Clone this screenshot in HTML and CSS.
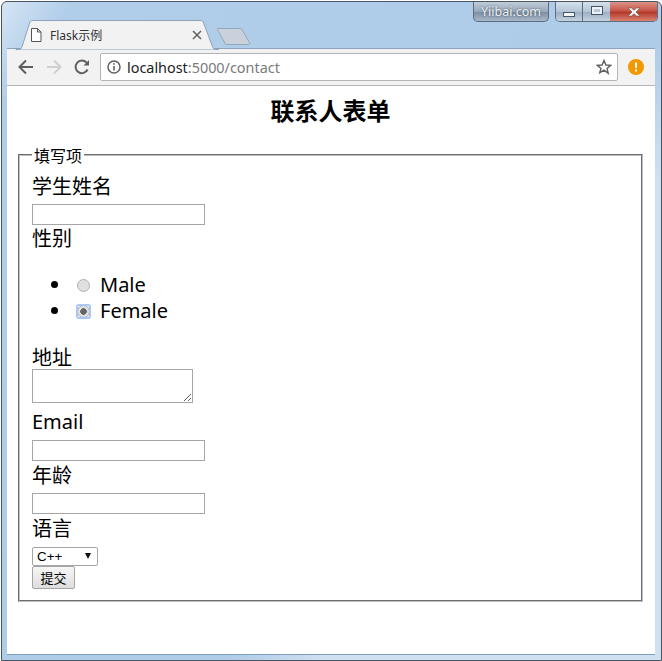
FILE: index.html
```html
<!DOCTYPE html>
<html lang="zh">
<head>
<meta charset="utf-8">
<title>Flask示例</title>
<link rel="stylesheet" href="styles.css">
</head>
<body>
<div class="window">
  <div class="caption">
    <div class="brand">Yiibai.com</div>
    <div class="controls">
      <div class="ctl ctl-min"><span class="min-glyph"></span></div>
      <div class="ctl ctl-max"><span class="max-glyph"></span></div>
      <div class="ctl ctl-close">
        <svg width="14" height="10" viewBox="0 0 14 10"><path d="M1 1h3.500l2.500 2.200L9.500 1H13L9 5l4 4H9.500L7 6.800 4.500 9H1l4-4z" fill="#f4f4f4" stroke="#7a4a44" stroke-width=".6"/></svg>
      </div>
    </div>
  </div>
  <div class="tabstrip">
    <div class="tab">
      <svg class="tab-shape" width="206" height="30" viewBox="0 0 206 30"><path d="M1 29.500h2.500c2 0 3-1 3.600-3L14.600 3c.6-2 1.400-2.500 3.400-2.500h167c2 0 3 .5 3.600 2.500l8.800 23.500c.7 2 1.600 3 3.600 3h2.500V30H1z" fill="#f2f2f2" stroke="#8ea3b9"/></svg>
      <svg class="tab-icon" width="12" height="14" viewBox="0 0 12 14"><path d="M1.500.5h6l3.500 3.500v9.500h-9.500zM7.500.5V4H11" fill="#fff" stroke="#555"/></svg>
      <span class="tab-title">Flask示例</span>
      <svg class="tab-close" width="10" height="10" viewBox="0 0 10 10"><path d="M1 1l8 8M9 1l-8 8" stroke="#5f5f5f" stroke-width="1.500"/></svg>
    </div>
    <svg class="newtab" width="36" height="18" viewBox="0 0 36 18"><path d="M1 .5h22c1 0 1.500.4 2 1.200l7.500 13c.6 1 .2 1.800-1 1.800H10c-1 0-1.500-.4-2-1.200L.5 1.800C0 1 0 .5 1 .5z" fill="#c9d2dc" stroke="#93a7ba"/></svg>
  </div>
  <div class="toolbar">
    <svg class="nav" width="20" height="20" viewBox="0 0 20 20"><path d="M17 10H4M10 3.500L3.500 10l6.500 6.500" fill="none" stroke="#5f5f5f" stroke-width="2"/></svg>
    <svg class="nav" width="20" height="20" viewBox="0 0 20 20"><path d="M3 10h13M10 3.500l6.500 6.500-6.500 6.500" fill="none" stroke="#d0d0d0" stroke-width="2"/></svg>
    <svg class="nav" width="20" height="20" viewBox="0 0 20 20"><path d="M15.600 12.500A6.300 6.300 0 1 1 14.500 5.500" fill="none" stroke="#5f5f5f" stroke-width="2"/><path d="M11.500 8.500H17V3z" fill="#5f5f5f"/></svg>
    <div class="omnibox">
      <svg class="info" width="14" height="14" viewBox="0 0 14 14"><circle cx="7" cy="7" r="6" fill="none" stroke="#5f5f5f" stroke-width="1.500"/><path d="M7 6v4.500M7 3.300v1.500" stroke="#5f5f5f" stroke-width="1.600"/></svg>
      <span class="url"><span class="host">localhost</span>:5000/contact</span>
      <svg class="star" width="16" height="16" viewBox="0 0 16 16"><path d="M8 1.500l1.900 4.500 4.800.4-3.700 3.100 1.200 4.700L8 11.200l-4.200 2.500L5 9.500 1.300 6.400l4.800-.4z" fill="none" stroke="#5f5f5f" stroke-width="1.400"/></svg>
    </div>
    <svg class="alert" width="16" height="16" viewBox="0 0 16 16"><circle cx="8" cy="8" r="8" fill="#f29900"/><path d="M8 3.500v5.500M8 10.500v2" stroke="#fff" stroke-width="2"/></svg>
  </div>
  <main class="page">
    <h1 class="title">联系人表单</h1>
    <form>
      <fieldset class="box">
        <legend class="legend">填写项</legend>
        <label class="field-label first">学生姓名</label>
        <input class="text-input" type="text">
        <label class="field-label gender">性别</label>
        <ul class="radios">
          <li><span class="radio"></span><span>Male</span></li>
          <li><span class="radio checked"></span><span>Female</span></li>
        </ul>
        <label class="field-label addr">地址</label>
        <textarea class="area"></textarea>
        <label class="field-label email">Email</label>
        <input class="text-input" type="text">
        <label class="field-label age">年龄</label>
        <input class="text-input" type="text">
        <label class="field-label language">语言</label>
        <div class="lang-wrap">
          <select class="lang"><option>C++</option></select>
        </div>
        <button class="submit" type="button">提交</button>
      </fieldset>
    </form>
  </main>
</div>
</body>
</html>
```

FILE: styles.css
```css
* { box-sizing: border-box; }
html, body { margin: 0; padding: 0; background: #fff; overflow: hidden; }
body { width: 662px; height: 661px; font-family: "Noto Sans", "Noto Sans CJK SC", sans-serif; }
.window {
  position: relative;
  width: 661px;
  height: 660px;
  margin: 1px 0 0 1px;
  padding: 17px 6px 5px 5px;
  display: flex;
  flex-direction: column;
  border: 1px solid #4a5563;
  border-radius: 6px 6px 0 0;
  background: linear-gradient(125deg, #d6e5f4 0, #b0cde9 60px, #aecbe8 560px, #cfe0f1 640px);
}
.caption {
  position: absolute;
  top: 0;
  right: 3px;
  display: flex;
  align-items: flex-start;
  gap: 6px;
}
.brand {
  width: 76px;
  height: 20px;
  border: 1px solid #5e6d7e;
  border-top: 0;
  border-radius: 0 0 5px 5px;
  background: linear-gradient(#c0ccd8, #99a8b9 50%, #7f90a3 55%, #a9b8c8);
  color: #eef1f4;
  font: 12.500px/19px "Noto Sans", sans-serif;
  text-align: center;
  text-shadow: 0 0 2px #3a4a5a;
}
.controls { display: flex; height: 20px; border: 1px solid #5e6d7e; border-top: 0; border-radius: 0 0 5px 5px; overflow: hidden; }
.ctl { display: flex; align-items: center; justify-content: center; height: 100%; }
.ctl-min { width: 27px; background: linear-gradient(#d5e0ea, #b5c5d6 50%, #9eb0c4 55%, #c3d2e0); border-right: 1px solid #5e6d7e; }
.ctl-max { width: 27px; background: linear-gradient(#d5e0ea, #b5c5d6 50%, #9eb0c4 55%, #c3d2e0); }
.ctl-close { width: 47px; background: linear-gradient(#dc9388, #c8574a 45%, #b43a2c 55%, #d9826f); }
.min-glyph { width: 12px; height: 5px; margin-top: 6px; background: #f2f5f8; border: 1px solid #46566a; }
.max-glyph { width: 12px; height: 9px; margin-bottom: 2px; background: transparent; border: 3px solid #eef2f6; outline: 1px solid #46566a; outline-offset: -1px; }
.tabstrip { display: flex; align-items: flex-end; height: 29px; padding-left: 8px; flex: none; position: relative; }
.tab {
  position: relative;
  width: 204px;
  height: 29px;
  display: flex;
  align-items: center;
  padding: 0 16px 0 8px;
  font: 12px "Noto Sans", "Noto Sans CJK SC", sans-serif;
  color: #333;
  z-index: 1;
  margin-bottom: -1px;
}
.tab-shape { position: absolute; left: 0; top: 0; }
.tab-icon { position: relative; margin: 0 8px 0 7px; flex: none; }
.tab-title { position: relative; flex: 1; }
.tab-close { position: relative; flex: none; margin-right: 1px; }
.newtab { margin: 0 0 2px -2px; flex: none; }
.toolbar {
  height: 38px;
  flex: none;
  display: flex;
  align-items: center;
  padding: 0 10px 0 9px;
  background: #f2f2f2;
  border-top: 1px solid #8ea3b9;
  border-bottom: 1px solid #b4b4b4;
  gap: 8px;
}
.nav { flex: none; }
.omnibox {
  flex: 1;
  height: 28px;
  display: flex;
  align-items: center;
  margin: 0 2px 0 0;
  padding: 0 5px 0 6px;
  background: #fff;
  border: 1px solid #b4b4b4;
  border-radius: 2px;
}
.info { flex: none; margin-right: 6px; }
.url { flex: 1; font: 14.400px "Noto Sans", sans-serif; color: #7a7a7a; }
.host { color: #222; }
.star { flex: none; }
.alert { flex: none; margin-right: 1px; }
.page {
  flex: 1;
  background: #fff;
  padding: 0 12px 0 11px;
  border-bottom: 1px solid #7f9dbd;
  overflow: hidden;
}
.title {
  margin: 0;
  padding-top: 7px;
  height: 49px;
  font: 700 24px/34px "Noto Sans CJK SC", sans-serif;
  text-align: center;
  color: #000;
}
.box {
  margin: 11px 0 0;
  padding: 0 12px 10px;
  height: 456px;
  border: 2px groove #c0c0c0;
  min-width: 0;
}
.legend { padding: 0 2px; margin-left: 0; font: 16px/18px "Noto Sans CJK SC", sans-serif; color: #000; }
.field-label { display: block; height: 26px; font: 20px/28px "Noto Sans", "Noto Sans CJK SC", sans-serif; color: #000; }
.first { margin-top: 9px; height: 31px; }
.text-input { display: block; width: 173px; height: 21px; margin: 0; padding: 1px 2px; border: 1px solid #a6a6a6; border-radius: 0; background: #fff; }
.gender { height: 26px; }
.radios { list-style: disc; margin: 21px 0 20px; padding: 0 0 0 40px; font: 20px/26px "Noto Sans", sans-serif; color: #000; }
.radios li { height: 26px; }
.radio {
  display: inline-block;
  width: 13px;
  height: 13px;
  margin: 0 10px 0 5px;
  vertical-align: 0;
  border: 1px solid #b0b0b0;
  border-radius: 50%;
  background: #e0e0e0;
}
.checked { position: relative; background: radial-gradient(circle, #666 0 3px, #e0e0e0 3.500px); }
.checked::after {
  content: "";
  position: absolute;
  inset: -2px;
  border: 2px solid #a9c7f5;
  border-radius: 3px;
}
.addr { height: 25px; }
.area { display: block; width: 161px; height: 34px; margin: 0; padding: 2px; border: 1px solid #a6a6a6; border-radius: 0; background: #fff; }
.email { margin-top: 5px; height: 32px; line-height: 28px; }
.age { height: 32px; line-height: 30px; }
.language { height: 27px; line-height: 30px; }
.lang-wrap { position: relative; width: 66px; margin-top: 6px; }
.lang-wrap::after {
  content: "";
  position: absolute;
  right: 7px;
  top: 6px;
  border-left: 3px solid transparent;
  border-right: 3px solid transparent;
  border-top: 6px solid #111;
}
.lang { display: block; appearance: none; width: 66px; height: 19px; padding: 0 0 0 4px; font: 13.330px "Liberation Sans", sans-serif; border: 1px solid #a6a6a6; border-radius: 2px; background: #fff; color: #000; }
.submit { display: block; width: 43px; height: 23px; margin: 0; padding: 0; font: 13px "Noto Sans CJK SC", sans-serif; color: #000; border: 1px solid #a6a6a6; border-radius: 2px; background: linear-gradient(#f6f6f6, #dedede); }
```
